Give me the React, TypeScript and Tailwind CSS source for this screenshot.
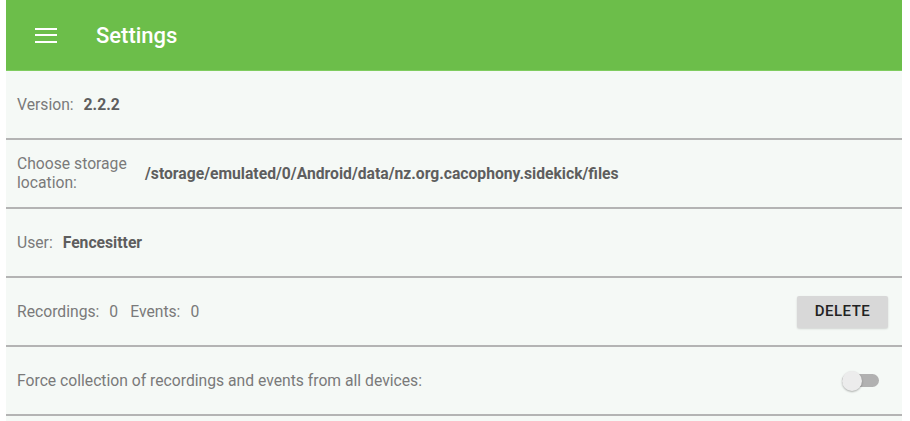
import React from 'react';

function Row({ children }: { children: React.ReactNode }) {
  return (
    <div>
      <div className="h-[67px] flex items-center pl-[11px] pr-[14px] text-[15.7px] text-[#7a7a7a]">{children}</div>
      <div className="h-[2px] bg-[#b4b4b4]" />
    </div>
  );
}

export default function App() {
  return (
    <div className="w-[910px] h-[421px] bg-white overflow-hidden" style={{ fontFamily: 'Roboto, "Noto Sans", sans-serif' }}>
      <div className="ml-[6px] w-[896px] h-full bg-[#f5f9f6]">
        {/* Toolbar */}
        <div className="h-[71px] bg-[#6cbe4a] flex items-center border-b border-[#7fcc5f]">
          <div className="ml-[29px] w-[22px] flex flex-col gap-[4.5px]">
            <div className="h-[2px] bg-white" />
            <div className="h-[2px] bg-white" />
            <div className="h-[2px] bg-white" />
          </div>
          <span className="ml-[39px] mt-[1px] text-white text-[22px] font-medium">Settings</span>
        </div>

        <Row>
          <span>Version:</span>
          <span className="ml-[10px] font-bold text-[#5e5e5e]">2.2.2</span>
        </Row>

        <Row>
          <span className="w-[122px] leading-[18.5px]">Choose storage location:</span>
          <span className="ml-[6px] font-bold text-[#5e5e5e]">/storage/emulated/0/Android/data/nz.org.cacophony.sidekick/files</span>
        </Row>

        <Row>
          <span>User:</span>
          <span className="ml-[10px] font-bold text-[#5e5e5e]">Fencesitter</span>
        </Row>

        <Row>
          <span>Recordings:</span>
          <span className="ml-[10px]">0</span>
          <span className="ml-[12px]">Events:</span>
          <span className="ml-[10px]">0</span>
          <button className="ml-auto mr-0 w-[91px] h-[32px] rounded-[2px] bg-[#d8d8d8] text-[#222] text-[15px] font-medium tracking-[0.5px] shadow-[0_1px_2px_rgba(0,0,0,0.15)]">
            DELETE
          </button>
        </Row>

        <Row>
          <span>Force collection of recordings and events from all devices:</span>
          <div className="ml-auto mr-[9px] relative w-[37px] h-[20px] flex items-center">
            <div className="w-[37px] h-[13px] rounded-full bg-[#b1b1b1]" />
            <div className="absolute left-0 top-0 w-[20px] h-[20px] rounded-full bg-[#ececec] shadow-[0_1px_2px_rgba(0,0,0,0.3)]" />
          </div>
        </Row>
      </div>
    </div>
  );
}
